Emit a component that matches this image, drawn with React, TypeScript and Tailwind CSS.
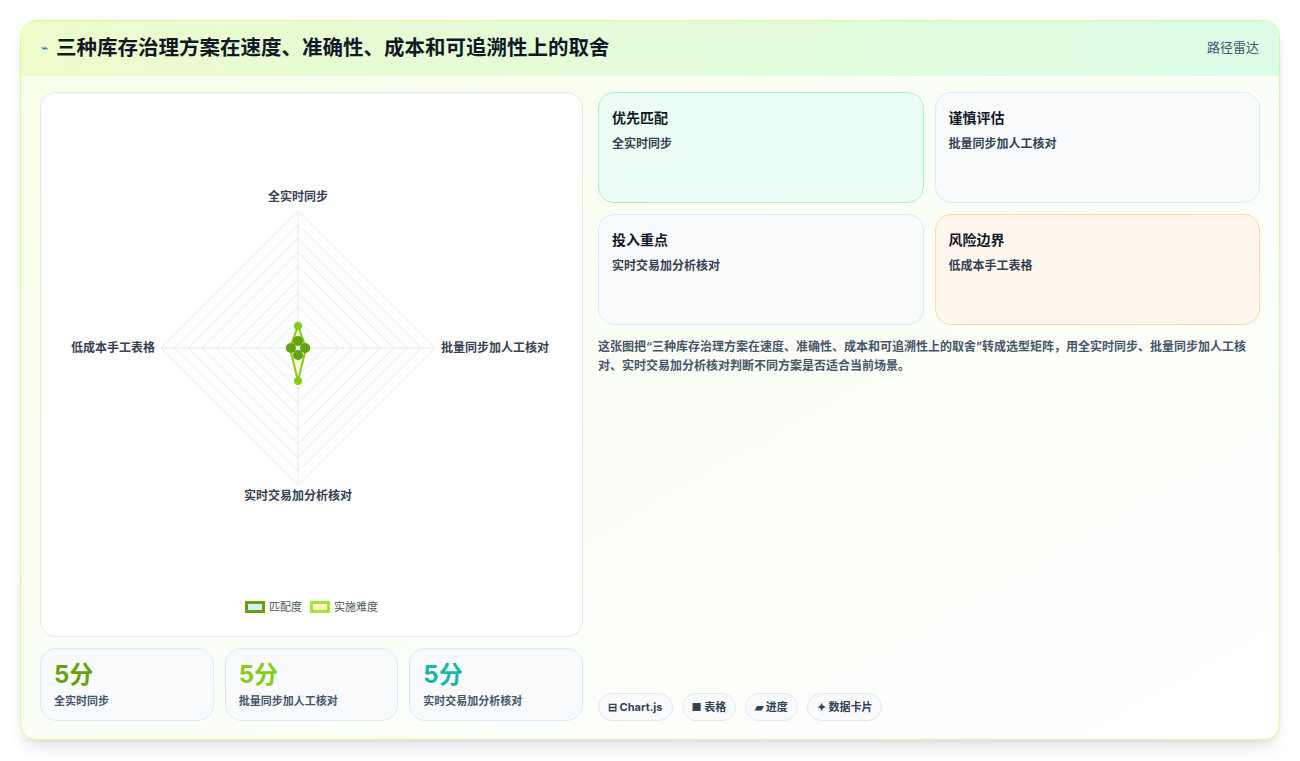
import React from "react";

const cx = 257, cy = 255, R = 137;
const axes = ["全实时同步", "批量同步加人工核对", "实时交易加分析核对", "低成本手工表格"];

function pt(i: number, r: number) {
  // order: top, right, bottom, left
  const d = [[0, -1], [1, 0], [0, 1], [-1, 0]][i];
  return [cx + d[0] * r, cy + d[1] * r];
}
function poly(rs: number[]) {
  return rs.map((r, i) => pt(i, r).join(",")).join(" ");
}

const cards = [
  { t: "优先匹配", s: "全实时同步", cls: "bg-[#ecfdf5] border-[#a7f3d0]" },
  { t: "谨慎评估", s: "批量同步加人工核对", cls: "bg-[#f8fafc] border-[#dbeafe]" },
  { t: "投入重点", s: "实时交易加分析核对", cls: "bg-[#f8fafc] border-[#dbeafe]" },
  { t: "风险边界", s: "低成本手工表格", cls: "bg-[#fff7ed] border-[#fed7aa]" },
];

const stats = [
  { v: "5分", l: "全实时同步", c: "text-[#65a30d]" },
  { v: "5分", l: "批量同步加人工核对", c: "text-[#84cc16]" },
  { v: "5分", l: "实时交易加分析核对", c: "text-[#14b8a6]" },
];

export default function App() {
  const font = { fontFamily: "Inter, 'Noto Sans CJK SC', sans-serif" };
  return (
    <div className="w-[1300px] h-[761px] bg-white p-5" style={font}>
      <div className="h-[720px] rounded-2xl border border-[#d9f99d] shadow-lg overflow-hidden flex flex-col bg-gradient-to-br from-[#f7fee7] via-[#fbfef6] to-white">
        <div className="h-[55px] shrink-0 flex items-center justify-between px-5 border-b border-[#dcfce7] bg-gradient-to-r from-[#ecfccb] to-[#dcfce7]">
          <div className="flex items-center gap-2">
            <span className="text-[#2563eb] text-xs">⌁</span>
            <h1 className="text-[20.5px] font-bold text-[#111827]">三种库存治理方案在速度、准确性、成本和可追溯性上的取舍</h1>
          </div>
          <span className="text-[13px] text-[#475569]">路径雷达</span>
        </div>
        <div className="flex-1 flex gap-[15px] px-[19px] pt-4 pb-[18px]">
          <div className="w-[543px] flex flex-col gap-[11px]">
            <div className="h-[545px] rounded-2xl border border-[#e2e8f0] bg-white relative">
              <svg width="541" height="543" className="absolute left-0 top-0">
                {Array.from({ length: 10 }, (_, k) => (
                  <polygon key={k} points={poly([1, 1, 1, 1].map(() => (R * (k + 1)) / 10))} fill="none" stroke="#e5e7eb" strokeWidth="1" />
                ))}
                {[0, 1, 2, 3].map((i) => {
                  const [x, y] = pt(i, R);
                  return <line key={i} x1={cx} y1={cy} x2={x} y2={y} stroke="#e5e7eb" />;
                })}
                <polygon points={poly([22, 8, 33, 8])} fill="rgba(254,243,199,0.5)" stroke="#84cc16" strokeWidth="2" />
                {[22, 8, 33, 8].map((r, i) => {
                  const [x, y] = pt(i, r);
                  return <circle key={i} cx={x} cy={y} r="4" fill="#84cc16" />;
                })}
                <polygon points={poly([7, 7, 7, 7])} fill="rgba(219,234,254,0.6)" stroke="#65a30d" strokeWidth="2" />
                {[7, 7, 7, 7].map((r, i) => {
                  const [x, y] = pt(i, r);
                  return <circle key={i} cx={x} cy={y} r="5" fill="#65a30d" />;
                })}
                <text x={cx} y={cy - 147} textAnchor="middle" fontSize="12" fontWeight="700" fill="#374151">{axes[0]}</text>
                <text x={cx + 143} y={cy + 4} textAnchor="start" fontSize="12" fontWeight="700" fill="#374151">{axes[1]}</text>
                <text x={cx} y={cy + 152} textAnchor="middle" fontSize="12" fontWeight="700" fill="#374151">{axes[2]}</text>
                <text x={cx - 143} y={cy + 4} textAnchor="end" fontSize="12" fontWeight="700" fill="#374151">{axes[3]}</text>
              </svg>
              <div className="absolute left-0 right-0 bottom-[21px] flex justify-center gap-2 text-[11px] text-[#4b5563]">
                <span className="flex items-center gap-1"><span className="w-5 h-3 border-[3px] border-[#65a30d] bg-[#dbeafe]" />匹配度</span>
                <span className="flex items-center gap-1"><span className="w-5 h-3 border-[3px] border-[#a3e635] bg-[#fef3c7]" />实施难度</span>
              </div>
            </div>
            <div className="grid grid-cols-3 gap-[11px]">
              {stats.map((s) => (
                <div key={s.l} className="h-[73px] rounded-2xl border border-[#dbeafe] bg-[#f8fafc] px-[13px] pt-[10px]">
                  <div className={`text-2xl font-bold ${s.c}`}>{s.v}</div>
                  <div className="text-[11px] font-semibold text-[#475569] mt-[2px]">{s.l}</div>
                </div>
              ))}
            </div>
          </div>
          <div className="flex-1 flex flex-col">
            <div className="grid grid-cols-2 gap-[11px]">
              {cards.map((c) => (
                <div key={c.t} className={`h-[111px] rounded-2xl border px-[13px] pt-[15px] ${c.cls}`}>
                  <div className="text-sm font-bold text-[#111827]">{c.t}</div>
                  <div className="text-xs font-semibold text-[#374151] mt-2">{c.s}</div>
                </div>
              ))}
            </div>
            <p className="text-xs font-semibold text-[#475569] leading-[19px] mt-[12px] pr-3">
              这张图把“三种库存治理方案在速度、准确性、成本和可追溯性上的取舍”转成选型矩阵，用全实时同步、批量同步加人工核对、实时交易加分析核对判断不同方案是否适合当前场景。
            </p>
            <div className="mt-auto flex gap-[9px] text-[11px] font-bold text-[#334155]">
              {["⊟ Chart.js", "■ 表格", "▰ 进度", "✦ 数据卡片"].map((t) => (
                <span key={t} className="h-[28px] px-[9px] flex items-center rounded-full border border-[#e2e8f0] bg-[#f8fafc]">{t}</span>
              ))}
            </div>
          </div>
        </div>
      </div>
    </div>
  );
}
